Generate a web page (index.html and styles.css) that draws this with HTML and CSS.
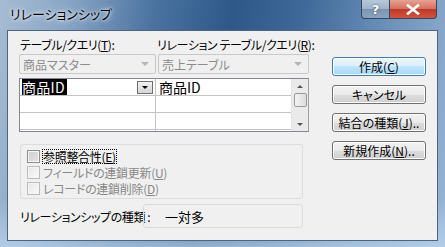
FILE: index.html
```html
<!DOCTYPE html>
<html lang="ja">
<head>
  <meta charset="UTF-8" />
  <title>リレーションシップ</title>
  <link rel="stylesheet" href="styles.css">
</head>
<body>
  <div class="window">
    <div class="titlebar">
      <span class="title">リレーションシップ</span>
      <div class="caption-buttons">
        <div class="cap help">?</div>
        <div class="cap close">
          <svg viewBox="0 0 14 11" width="14" height="11">
            <path d="M2 1.5 L12 9.5 M12 1.5 L2 9.5" stroke="#fff" stroke-width="2.6" stroke-linecap="square"/>
          </svg>
        </div>
      </div>
    </div>

    <div class="client">
      <div class="main">
        <div class="labels">
          <span class="col-left">テーブル/クエリ(<u>T</u>):</span>
          <span class="col-right">リレーション テーブル/クエリ(<u>R</u>):</span>
        </div>

        <div class="combos">
          <div class="combo col-left"><span>商品マスター</span><i class="arrow"></i></div>
          <div class="combo col-right"><span>売上テーブル</span><i class="arrow"></i></div>
        </div>

        <div class="grid">
          <div class="cells">
            <div class="row">
              <div class="cell col-left">
                <span class="selected">商品ID</span>
                <span class="drop"><i></i></span>
              </div>
              <div class="cell">商品ID</div>
            </div>
            <div class="row"><div class="cell col-left"></div><div class="cell"></div></div>
            <div class="row"><div class="cell col-left"></div><div class="cell"></div></div>
            <div class="row"><div class="cell col-left"></div><div class="cell"></div></div>
          </div>
          <div class="scrollbar">
            <span class="sb-arrow up"></span>
            <span class="sb-thumb"></span>
            <span class="sb-space"></span>
            <span class="sb-arrow down"></span>
          </div>
        </div>

        <div class="options">
          <label class="check">
            <span class="box"></span>
            <span class="focus">参照整合性(<u>E</u>)</span>
          </label>
          <label class="check disabled">
            <span class="box"></span>
            <span>フィールドの連鎖更新(<u>U</u>)</span>
          </label>
          <label class="check disabled">
            <span class="box"></span>
            <span>レコードの連鎖削除(<u>D</u>)</span>
          </label>
        </div>

        <div class="type-row">
          <span class="type-label">リレーションシップの種類 :</span>
          <span class="type-value">一対多</span>
        </div>
      </div>

      <div class="actions">
        <button class="btn default">作成(<u>C</u>)</button>
        <button class="btn">キャンセル</button>
        <button class="btn">結合の種類(<u>J</u>)..</button>
        <button class="btn">新規作成(<u>N</u>)..</button>
      </div>
    </div>
  </div>
</body>
</html>
```

FILE: styles.css
```css
body {
  margin: 0;
  font-family: "Noto Sans CJK JP", "Noto Sans", sans-serif;
  font-size: 12px;
  font-feature-settings: "palt";
  color: #000;
  background: #fff;
  white-space: nowrap;
}
.window {
  width: 445px;
  height: 247px;
  display: flex;
  flex-direction: column;
  background:
    linear-gradient(180deg, rgba(255, 255, 255, 0) 80%, rgba(190, 215, 240, 0.7) 100%),
    linear-gradient(100deg, #a6bcd3 0%, #8aa6c6 14%, #4a73a0 32%, #2d5888 48%, #3d6897 62%, #6b90ba 80%, #9ab6d4 100%);
  overflow: hidden;
}
.titlebar {
  height: 30px;
  display: flex;
  align-items: flex-start;
  justify-content: space-between;
}
.title {
  margin: 6px 0 0 10px;
  font-size: 13px;
  line-height: 16px;
  text-shadow: 0 0 6px #fff, 0 0 3px #fff;
}
.caption-buttons {
  display: flex;
  margin-right: 8px;
}
.cap {
  height: 18px;
  border: 1px solid #34475e;
  border-top: none;
  display: flex;
  align-items: center;
  justify-content: center;
  color: #fff;
  font-family: "DejaVu Sans", sans-serif;
  font-weight: bold;
  font-size: 13px;
}
.help {
  width: 27px;
  border-radius: 0 0 0 4px;
  border-right: none;
  background: linear-gradient(180deg, #b8c8da 0%, #9fb3ca 48%, #7d95b2 52%, #8aa3c0 100%);
  text-shadow: 0 0 2px #334;
}
.close {
  width: 46px;
  border-radius: 0 0 4px 0;
  background: linear-gradient(180deg, #e6a293 0%, #d5725d 48%, #c0392a 52%, #d0543b 100%);
}
.client {
  flex: 1;
  margin: 0 7px 6px 7px;
  border: 1px solid #4c6581;
  background: #f0f0f0;
  display: flex;
  padding: 7px 11px 0 11px;
}
.main {
  width: 290px;
  display: flex;
  flex-direction: column;
}
.col-left {
  width: 136px;
  flex-shrink: 0;
}
.labels {
  display: flex;
  line-height: 14px;
  height: 15px;
  padding-left: 1px;
  letter-spacing: -0.4px;
}
.labels .col-right {
  padding-left: 1px;
}
.combos {
  display: flex;
  gap: 2px;
  margin-top: 1px;
}
.combo {
  height: 18px;
  border: 1px solid #c9c9c9;
  border-radius: 2px;
  color: #8b8b8b;
  display: flex;
  align-items: center;
  justify-content: space-between;
  padding: 0 6px 0 3px;
  box-sizing: content-box;
}
.combos .col-left {
  width: 126px;
}
.combos .col-right {
  flex: 1;
}
.arrow {
  width: 0;
  height: 0;
  border-left: 4px solid transparent;
  border-right: 4px solid transparent;
  border-top: 4px solid #b5b5b5;
}
.grid {
  margin-top: 4px;
  height: 52px;
  display: flex;
  border: 1px solid #828790;
  border-right: 1px solid #a0a0a0;
  background: #fff;
  overflow: hidden;
}
.cells {
  flex: 1;
}
.row {
  display: flex;
  height: 16px;
  border-bottom: 1px solid #c4c4c4;
}
.cell {
  flex: 1;
  font-size: 14px;
  line-height: 16px;
  padding-left: 3px;
  display: flex;
  align-items: center;
}
.cell.col-left {
  width: 133px;
  flex: none;
  border-right: 1px solid #c4c4c4;
  justify-content: space-between;
  padding-left: 2px;
}
.selected {
  background: #000;
  color: #fff;
  height: 16px;
  padding-right: 2px;
  letter-spacing: 0.3px;
}
.drop {
  width: 14px;
  height: 11px;
  margin-right: 2px;
  border: 1px solid #707070;
  background: linear-gradient(180deg, #f2f2f2, #d4d4d4);
  display: flex;
  align-items: center;
  justify-content: center;
}
.drop i {
  border-left: 3px solid transparent;
  border-right: 3px solid transparent;
  border-top: 3px solid #000;
}
.scrollbar {
  width: 16px;
  background: #eaeaea;
  border-left: 1px solid #e4e4e4;
  display: flex;
  flex-direction: column;
  align-items: center;
}
.sb-arrow {
  height: 14px;
  display: flex;
  align-items: center;
}
.sb-arrow::before {
  content: "";
  border-left: 3px solid transparent;
  border-right: 3px solid transparent;
}
.up::before {
  border-bottom: 3px solid #555;
}
.down::before {
  border-top: 3px solid #555;
}
.sb-thumb {
  width: 13px;
  height: 14px;
  border: 1px solid #9a9a9a;
  border-radius: 2px;
  background: linear-gradient(90deg, #f3f3f3, #dcdcdc);
  box-sizing: border-box;
}
.sb-space {
  flex: 1;
}
.options {
  margin: 12px 6px 0 1px;
  height: 55px;
  box-sizing: border-box;
  border: 1px solid #dcdcdc;
  border-radius: 3px;
  padding: 3px 0 0 6px;
  display: flex;
  flex-direction: column;
}
.check {
  display: flex;
  align-items: center;
  height: 16px;
  gap: 3px;
  letter-spacing: -0.3px;
}
.box {
  width: 11px;
  height: 11px;
  border: 1px solid #8e8f8f;
  background: linear-gradient(135deg, #cfcfcf, #e4e4e4);
  box-shadow: inset 0 0 0 1px #f4f4f4;
}
.focus {
  outline: 1px dotted #000;
  line-height: 13px;
}
.disabled {
  color: #888;
}
.disabled .box {
  border-color: #bcbcbc;
  background: linear-gradient(135deg, #e6e6e6, #fbfbfb);
}
.type-row {
  display: flex;
  align-items: center;
  margin-top: 5px;
  margin-left: 1px;
}
.type-label {
  width: 123px;
  letter-spacing: -0.4px;
}
.type-value {
  width: 160px;
  height: 24px;
  box-sizing: border-box;
  border: 1px solid #dcdcdc;
  border-radius: 3px;
  padding-left: 21px;
  display: flex;
  align-items: center;
  font-size: 13px;
}
.actions {
  margin-left: 23px;
  padding-top: 19px;
  display: flex;
  flex-direction: column;
  gap: 9px;
}
.btn {
  width: 94px;
  height: 19px;
  padding: 0;
  font-family: inherit;
  font-feature-settings: "palt";
  font-size: 12px;
  line-height: 15px;
  border: 1px solid #707070;
  border-radius: 3px;
  background: linear-gradient(180deg, #f2f2f2 0%, #ebebeb 50%, #dddddd 50%, #cfcfcf 100%);
  box-shadow: inset 0 0 0 1px #fcfcfc;
  color: #000;
}
.default {
  border-color: #3c7fb1;
  background: linear-gradient(180deg, #eaf6fd 0%, #d9f0fc 50%, #bee6fd 50%, #a7d9f5 100%);
}
```
